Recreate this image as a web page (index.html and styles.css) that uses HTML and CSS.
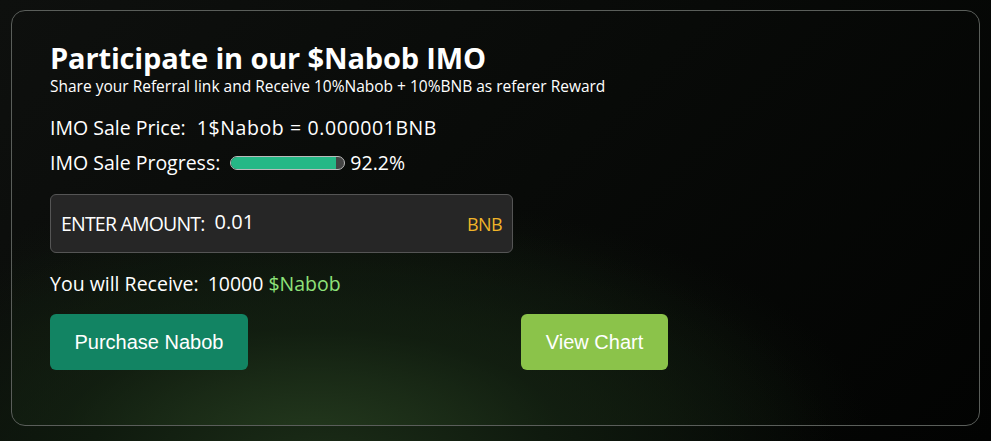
FILE: index.html
```
<!DOCTYPE html>
<html>
<head>
<meta charset="utf-8">
<link rel="stylesheet" href="styles.css">
</head>
<body>
<div class="card">
  <h1 class="title">Participate in our $Nabob IMO</h1>
  <p class="subtitle">Share your Referral link and Receive 10%Nabob + 10%BNB as referer Reward</p>
  <div class="row price"><span>IMO Sale Price:</span><span class="value">1$Nabob = 0.000001BNB</span></div>
  <div class="row progress-row">
    <span>IMO Sale Progress:</span>
    <div class="bar"><div class="fill" style="width:92.2%"></div></div>
    <span>92.2%</span>
  </div>
  <div class="amount">
    <span class="amount-label">ENTER AMOUNT:</span>
    <span class="amount-value">0.01</span>
    <span class="amount-unit">BNB</span>
  </div>
  <div class="row receive"><span>You will Receive:</span><span class="value">10000 <span class="green">$Nabob</span></span></div>
  <div class="buttons">
    <button class="btn btn-buy">Purchase Nabob</button>
    <button class="btn btn-chart">View Chart</button>
  </div>
</div>
</body>
</html>
```
FILE: styles.css
```
html, body {
  margin: 0;
  padding: 0;
}
body {
  width: 991px;
  height: 441px;
  overflow: hidden;
  font-family: "Open Sans", "Noto Sans", sans-serif;
  color: #fff;
  background:
    radial-gradient(ellipse 520px 260px at 320px 470px, #1c2e18 0%, #0f1a0e 45%, rgba(5,8,5,0) 100%),
    linear-gradient(135deg, #0e100e 0%, #080a08 50%, #020302 100%);
  padding: 10px 11px 0 11px;
  box-sizing: border-box;
}
.card {
  width: 969px;
  height: 416px;
  box-sizing: border-box;
  border: 1px solid #5a5e5a;
  border-radius: 14px;
  padding: 29px 38px 0 38px;
  background:
    radial-gradient(ellipse 560px 250px at 300px 430px, rgba(36,58,30,0.9) 0%, rgba(20,34,18,0.6) 45%, rgba(0,0,0,0) 100%);
}
.title {
  margin: 0;
  font-size: 29px;
  font-weight: 700;
  line-height: 36px;
  letter-spacing: -0.15px;
}
.subtitle {
  margin: 0;
  font-size: 15.5px;
  line-height: 20px;
  letter-spacing: 0;
}
.row {
  font-size: 19.5px;
  line-height: 26px;
  display: flex;
  align-items: center;
}
.value {
  margin-left: 11px;
}
.price .value {
  letter-spacing: 0.6px;
}
.price {
  margin-top: 19px;
}
.progress-row {
  margin-top: 9px;
}
.bar {
  width: 113px;
  height: 12px;
  border: 1px solid #bbb;
  border-radius: 7px;
  background: #444;
  overflow: hidden;
  margin: 0 5px 0 10px;
}
.fill {
  height: 100%;
  background: #25b886;
}
.amount {
  margin-top: 18px;
  width: 463px;
  height: 59px;
  box-sizing: border-box;
  background: #262626;
  border: 1px solid #555;
  border-radius: 6px;
  display: flex;
  align-items: center;
  padding: 0 10px 0 10px;
}
.amount-label {
  font-size: 19.5px;
  letter-spacing: -0.8px;
}
.amount-value {
  margin-left: 10px;
  font-size: 20px;
  margin-top: -4px;
}
.amount-unit {
  margin-left: auto;
  color: #f0b429;
  font-size: 18px;
  letter-spacing: -0.6px;
}
.receive {
  margin-top: 18px;
}
.receive .value {
  margin-left: 9px;
}
.green {
  color: #8ee27a;
}
.buttons {
  margin-top: 17px;
  display: flex;
  gap: 273px;
}
.btn {
  height: 56px;
  border: none;
  border-radius: 6px;
  color: #fff;
  font-family: "Liberation Sans", Arial, sans-serif;
  font-size: 20px;
  padding: 0 10px;
}
.btn-buy {
  width: 198px;
  background: #128463;
}
.btn-chart {
  width: 147px;
  background: #8bc34a;
}
```
